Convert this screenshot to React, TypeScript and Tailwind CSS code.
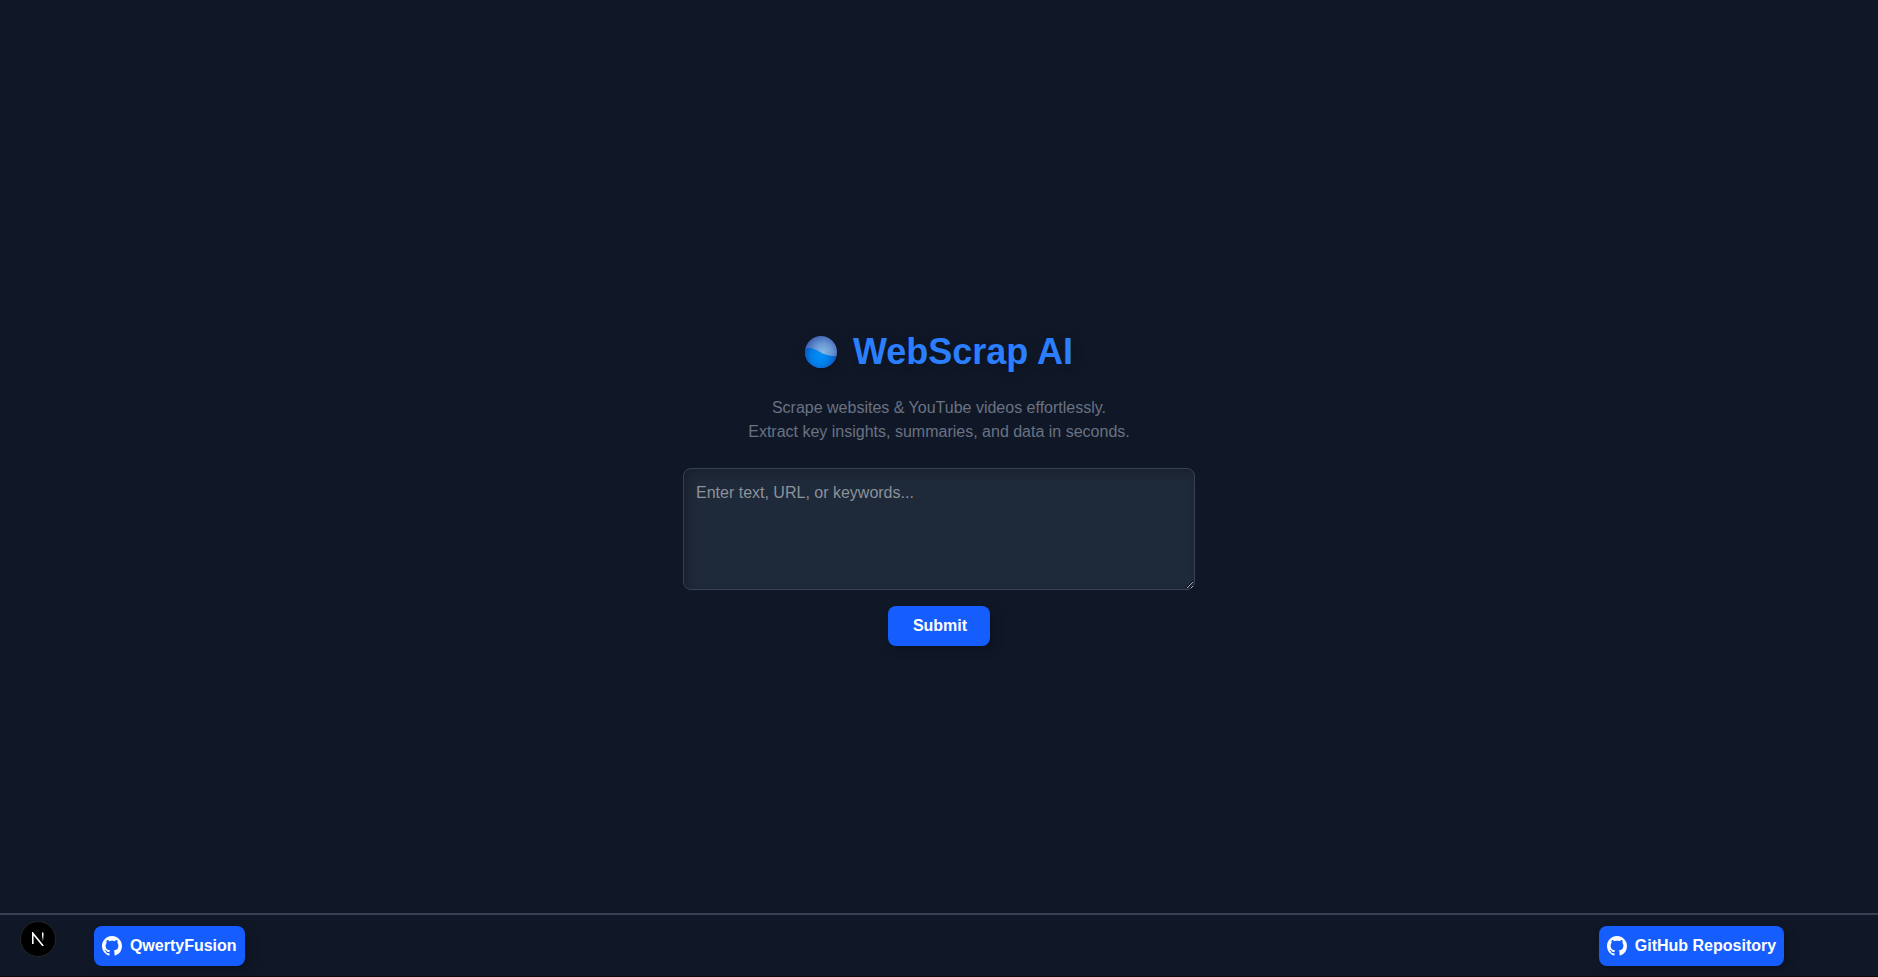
import React from "react";

function GitHubMark() {
  return (
    <svg viewBox="0 0 16 16" className="size-5 shrink-0" fill="currentColor" aria-hidden="true">
      <path d="M8 0C3.58 0 0 3.58 0 8c0 3.54 2.29 6.53 5.47 7.59.4.07.55-.17.55-.38 0-.19-.01-.82-.01-1.49-2.01.37-2.53-.49-2.69-.94-.09-.23-.48-.94-.82-1.13-.28-.15-.68-.52-.01-.53.63-.01 1.08.58 1.23.82.72 1.21 1.87.87 2.33.66.07-.52.28-.87.51-1.07-1.78-.2-3.64-.89-3.64-3.95 0-.87.31-1.59.82-2.15-.08-.2-.36-1.02.08-2.12 0 0 .67-.21 2.2.82.64-.18 1.32-.27 2-.27s1.36.09 2 .27c1.53-1.04 2.2-.82 2.2-.82.44 1.1.16 1.92.08 2.12.51.56.82 1.27.82 2.15 0 3.07-1.87 3.75-3.65 3.95.29.25.54.73.54 1.48 0 1.07-.01 1.93-.01 2.2 0 .21.15.46.55.38A8.01 8.01 0 0 0 16 8c0-4.42-3.58-8-8-8Z" />
    </svg>
  );
}

function Logo() {
  return (
    <svg viewBox="0 0 32 32" className="size-8 shrink-0 drop-shadow-[2px_2px_4px_rgba(0,0,0,0.3)]" aria-hidden="true">
      <defs>
        <radialGradient id="sky" gradientUnits="userSpaceOnUse" cx="18" cy="16" r="18">
          <stop offset="0" stopColor="#86b8e6" />
          <stop offset="0.5" stopColor="#6796d2" />
          <stop offset="1" stopColor="#3f5cb0" />
        </radialGradient>
        <radialGradient id="sea" gradientUnits="userSpaceOnUse" cx="15" cy="20" r="18">
          <stop offset="0" stopColor="#0090fa" />
          <stop offset="0.5" stopColor="#027de8" />
          <stop offset="1" stopColor="#0650b4" />
        </radialGradient>
        <clipPath id="ball"><circle cx="16" cy="16" r="16" /></clipPath>
      </defs>
      <g clipPath="url(#ball)">
        <rect width="32" height="32" fill="url(#sky)" />
        <path d="M0 12.3C5 11.3 9 12.3 14 15.5C19 18.5 24 20.3 32 20V32H0Z" fill="url(#sea)" />
      </g>
    </svg>
  );
}

function FooterLink({ label }: { label: string }) {
  return (
    <a href="#" className="flex h-10 items-center gap-2 rounded-lg bg-[#155dfc] px-2 font-bold text-white shadow-[4px_4px_10px_rgba(0,0,0,0.3)]">
      <GitHubMark />
      <span>{label}</span>
    </a>
  );
}

export default function App() {
  return (
    <div className="flex h-[977px] flex-col border-b border-[#0a0a0a] bg-[#101828] font-['Liberation_Sans',Arial,sans-serif] text-base text-white">
      <main className="flex flex-1 flex-col items-center pt-[332px]">
        <h1 className="flex items-center gap-4 text-4xl leading-10 font-bold text-[#2b7fff] [text-shadow:2px_2px_10px_rgba(0,0,0,0.3)]">
          <Logo />
          <span>WebScrap AI</span>
        </h1>
        <p className="mt-6 text-center leading-6 text-[#6a7282]">
          Scrape websites &amp; YouTube videos effortlessly.
          <br />
          Extract key insights, summaries, and data in seconds.
        </p>
        <textarea
          placeholder="Enter text, URL, or keywords..."
          className="mt-6 block h-[122px] w-lg resize rounded-lg border border-[#364153] bg-[#1e2939] p-3 shadow-[inset_4px_4px_10px_rgba(0,0,0,0.2)] outline-none placeholder:text-[#8c9199]"
        />
        <button className="mt-4 h-10 rounded-lg bg-[#155dfc] pr-[23px] pl-[25px] font-bold shadow-[4px_4px_10px_rgba(0,0,0,0.3)]">Submit</button>
      </main>
      <footer className="relative flex h-[63px] items-start justify-between border-t-2 border-[#364153] px-[5%] pt-[11px]">
        <FooterLink label="QwertyFusion" />
        <FooterLink label="GitHub Repository" />
        <div className="absolute top-[6px] left-5 flex size-9 items-center justify-center rounded-full border border-[#252525] bg-black">
          <svg viewBox="0 0 12 14" className="h-3.5 w-3" fill="none" aria-hidden="true">
            <defs>
              <linearGradient id="stem" x1="0" y1="0" x2="0" y2="1">
                <stop offset="0.3" stopColor="#fff" />
                <stop offset="1" stopColor="#fff" stopOpacity="0" />
              </linearGradient>
            </defs>
            <path d="M.8 12V1.2L11.2 14" stroke="#fff" strokeWidth="1.6" />
            <rect x="10" y="0.5" width="1.5" height="9" fill="url(#stem)" />
          </svg>
        </div>
      </footer>
    </div>
  );
}
